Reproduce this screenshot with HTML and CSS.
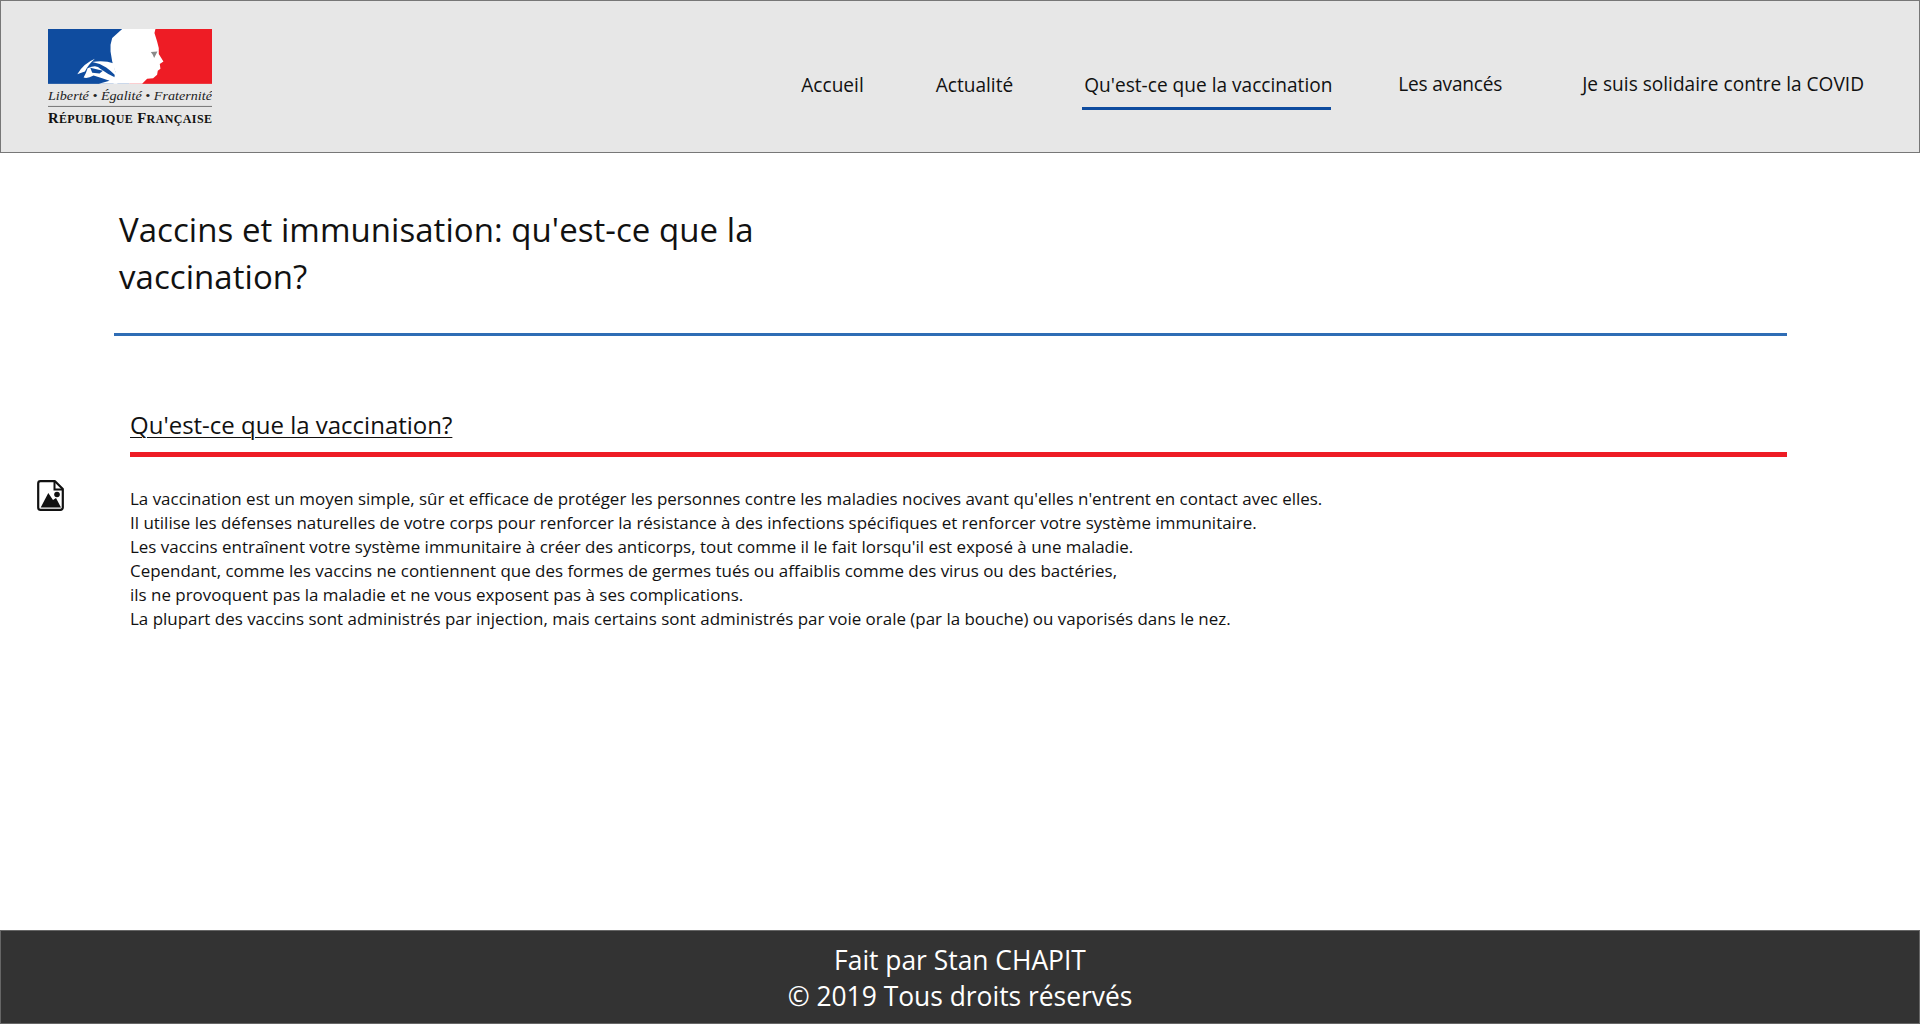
FILE: index.html
```html
<!DOCTYPE html>
<html lang="fr">
<head>
<meta charset="utf-8">
<title>Vaccins et immunisation</title>
<link rel="stylesheet" href="styles.css">
</head>
<body>
<header class="site-header">
  <a class="logo" href="#">
    <svg width="164" height="97" viewBox="143 87 493 290" preserveAspectRatio="none" xmlns="http://www.w3.org/2000/svg">
      <rect x="143" y="87" width="245" height="164" fill="#0f4c9f"/>
      <rect x="388" y="87" width="248" height="164" fill="#ee1c25"/>
      <path fill="#fff" d="M366 87H466L463 99L471 124L476 144L476 162L490 184L479 192L481 206L473 212L471 224L459 234L441 236L426 251H340L345 214L336 184L331 154L331 134L336 114Z"/>
      <path fill="#fff" d="M342 190Q310 180 276 186Q300 190 318 202Q332 212 346 226Z"/>
      <path fill="#fff" d="M231 222Q250 190 284 176Q262 196 254 214Q244 218 231 222Z"/>
      <path fill="#fff" d="M262 204Q290 192 300 206Q322 222 345 232L352 251H296L328 242Q300 232 280 226Q262 236 250 232Q258 218 262 204Z"/>
      <path fill="#0f4c9f" d="M270 203L308 212L298 220L276 218Z"/>
      <path fill="#8a8a8a" d="M452 156L472 154L462 174L458 164Z"/>
      <text class="logo-motto" x="143" y="299" textLength="493" lengthAdjust="spacingAndGlyphs">Liberté • Égalité • Fraternité</text>
      <rect x="143" y="317" width="493" height="3" fill="#777"/>
      <text class="logo-name" x="143" y="367" textLength="493" lengthAdjust="spacing">R<tspan class="logo-small">ÉPUBLIQUE</tspan> F<tspan class="logo-small">RANÇAISE</tspan></text>
    </svg>
  </a>
  <nav class="nav">
    <a class="nav-item nav-accueil" href="#">Accueil</a>
    <a class="nav-item nav-actu" href="#">Actualité</a>
    <a class="nav-item nav-active" href="#">Qu'est-ce que la vaccination</a>
    <a class="nav-item nav-avances" href="#">Les avancés</a>
    <a class="nav-item nav-covid" href="#">Je suis solidaire contre la COVID</a>
  </nav>
</header>
<main class="main">
  <div class="title-block">
    <h1 class="title">Vaccins et immunisation: qu'est-ce que la vaccination?</h1>
  </div>
  <hr class="rule-blue">
  <section class="section">
    <h2 class="section-title">Qu'est-ce que la vaccination?</h2>
    <hr class="rule-red">
  </section>
  <div class="content">
    <svg class="doc-icon" width="27" height="31" viewBox="0 0 27 31" xmlns="http://www.w3.org/2000/svg">
      <path d="M3.5 1.2H18L25.8 9V27.500A2.3 2.3 0 0 1 23.5 29.8H3.5A2.3 2.3 0 0 1 1.2 27.5V3.5A2.3 2.3 0 0 1 3.5 1.2Z" fill="#fff" stroke="#111" stroke-width="2.2" stroke-linejoin="round"/>
      <path d="M17.5 1.5V9.5H25.5" fill="none" stroke="#111" stroke-width="2"/>
      <circle cx="20" cy="14.5" r="2.8" fill="#111"/>
      <path d="M3.7 27.5L11.3 13L16 20L19 18L24 27.500Z" fill="#111"/>
    </svg>
    <p class="text">La vaccination est un moyen simple, sûr et efficace de protéger les personnes contre les maladies nocives avant qu'elles n'entrent en contact avec elles.<br>Il utilise les défenses naturelles de votre corps pour renforcer la résistance à des infections spécifiques et renforcer votre système immunitaire.<br>Les vaccins entraînent votre système immunitaire à créer des anticorps, tout comme il le fait lorsqu'il est exposé à une maladie.<br>Cependant, comme les vaccins ne contiennent que des formes de germes tués ou affaiblis comme des virus ou des bactéries,<br>ils ne provoquent pas la maladie et ne vous exposent pas à ses complications.<br>La plupart des vaccins sont administrés par injection, mais certains sont administrés par voie orale (par la bouche) ou vaporisés dans le nez.</p>
  </div>
</main>
<footer class="footer">
  <p class="footer-line">Fait par Stan CHAPIT</p>
  <p class="footer-line">© 2019 Tous droits réservés</p>
</footer>
</body>
</html>
```
FILE: styles.css
```css
* { box-sizing: border-box; }
html, body { height: 100%; }
body {
  margin: 0;
  height: 1024px;
  overflow: hidden;
  display: flex;
  flex-direction: column;
  background: #fff;
  color: #111;
  font-family: "Open Sans", "Noto Sans", sans-serif;
}
a { color: inherit; text-decoration: none; }
.site-header {
  height: 153px;
  flex: none;
  display: flex;
  align-items: flex-start;
  justify-content: space-between;
  background: #e7e7e7;
  border: 1px solid #777;
  padding: 28px 55px 0 47px;
}
.logo { display: block; height: 97px; }
.logo svg { display: block; }
.logo-motto { font: italic 36px "Liberation Serif", serif; fill: #222; }
.logo-name { font: bold 44px "Liberation Serif", serif; fill: #111; }
.logo-small { font-size: 36px; }
.nav {
  display: flex;
  align-items: flex-start;
  padding-top: 43px;
  font-size: 19.1px;
  line-height: 26px;
}
.nav-item { display: block; white-space: nowrap; }
.nav-actu { margin-left: 72px; }
.nav-active {
  margin-left: 69px;
  width: 249px;
  height: 38px;
  padding-left: 2px;
  border-bottom: 3px solid #0f4c9f;
}
.nav-avances { margin-left: 67px; margin-top: -1px; letter-spacing: -0.2px; }
.nav-covid { margin-left: 80px; margin-top: -1px; }
.main { flex: 1; min-height: 0; }
.title-block { padding: 53px 0 0 119px; width: 790px; }
.title {
  margin: 0;
  font-weight: 400;
  font-size: 33px;
  line-height: 47px;
  letter-spacing: 0.05px;
}
.rule-blue {
  margin: 33px 133px 0 114px;
  border: 0;
  height: 3px;
  background: #2f6db5;
}
.section { margin: 73px 133px 0 130px; }
.section-title {
  margin: 0;
  font-weight: 400;
  font-size: 24px;
  line-height: 32px;
  text-decoration: underline;
  text-underline-offset: 3px;
  text-decoration-thickness: 1px;
}
.rule-red {
  margin: 11px 0 0;
  border: 0;
  height: 5px;
  background: #ee1c25;
}
.content {
  display: flex;
  align-items: flex-start;
  padding: 23px 0 0 37px;
}
.doc-icon { flex: none; }
.text {
  margin: 7px 0 0 66px;
  font-size: 16.95px;
  line-height: 24px;
  white-space: nowrap;
}
.footer {
  height: 94px;
  flex: none;
  background: #333;
  border: 1px solid #666;
  color: #fff;
  text-align: center;
  font-size: 26.4px;
  line-height: 36px;
  padding-top: 11px;
}
.footer-line { margin: 0; }
```
